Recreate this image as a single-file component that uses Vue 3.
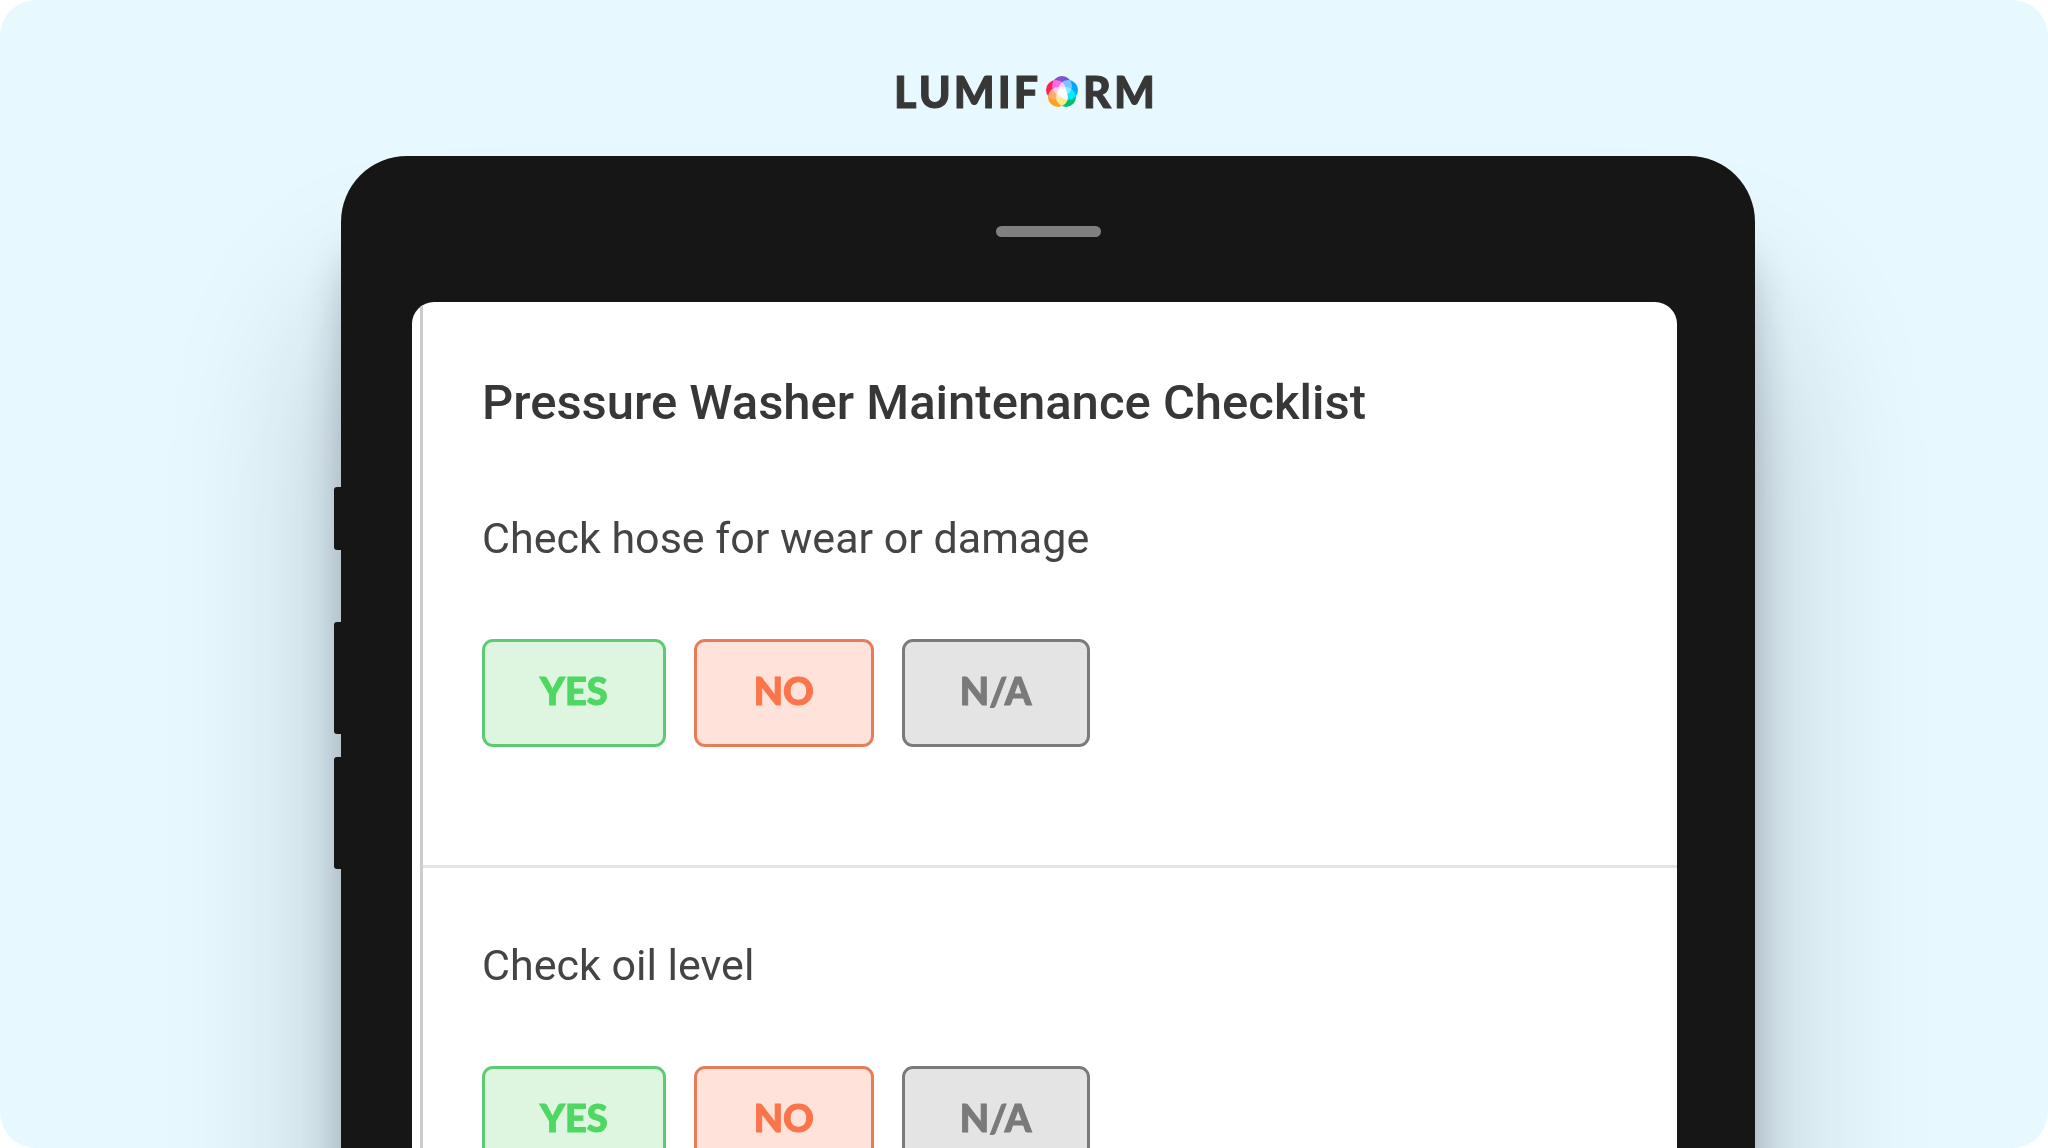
<script setup>
const answers = [
  { label: 'YES', tone: 'yes' },
  { label: 'NO', tone: 'no' },
  { label: 'N/A', tone: 'na' },
]

const questions = ['Check hose for wear or damage', 'Check oil level']

const petals = [
  { x: 16, y: 10, color: '#7c55cc' },
  { x: 22, y: 14, color: '#00a6fb' },
  { x: 20, y: 21, color: '#00c078' },
  { x: 12, y: 21, color: '#ffa01e' },
  { x: 10, y: 14, color: '#ff1f5c' },
]
</script>

<template>
  <main class="stage">
    <div class="brand" role="img" aria-label="Lumiform">
      <span class="brand-text">LUMIF</span>
      <svg class="brand-mark" viewBox="0 0 32 32" aria-hidden="true">
        <g class="petals">
          <circle v-for="p in petals" :key="p.color" :cx="p.x" :cy="p.y" r="10" :fill="p.color" />
        </g>
        <circle cx="16" cy="16" r="5" fill="#fff" opacity="0.5" />
      </svg>
      <span class="brand-text">RM</span>
    </div>

    <div class="device-row">
      <div class="device">
        <div class="side-keys">
          <i class="key key-short"></i>
          <i class="key"></i>
          <i class="key"></i>
        </div>
        <div class="speaker"></div>
        <div class="screen">
          <div class="sheet">
            <section
              v-for="(question, index) in questions"
              :key="question"
              class="item"
              role="group"
              :aria-labelledby="`question-${index}`"
            >
              <h1 v-if="index === 0" class="title">Pressure Washer Maintenance Checklist</h1>
              <p :id="`question-${index}`" class="question">{{ question }}</p>
              <div class="answers">
                <button
                  v-for="a in answers"
                  :key="a.tone"
                  type="button"
                  class="answer"
                  :class="a.tone"
                >{{ a.label }}</button>
              </div>
            </section>
          </div>
        </div>
      </div>
    </div>
  </main>
</template>

<style>
body {
  margin: 0;
  background: #fff;
}
</style>

<style scoped>
.stage {
  box-sizing: border-box;
  height: 100vh;
  overflow: hidden;
  border-radius: 36px;
  background: #e7f9ff;
  font-family: Roboto, "Liberation Sans", sans-serif;
  color: #373737;
}

.brand {
  display: flex;
  justify-content: center;
  align-items: center;
  gap: 5px;
  height: 60px;
  padding: 62px 0 34px 4px;
}

.brand-text {
  font-family: Lato, "Liberation Sans", sans-serif;
  font-weight: 900;
  font-size: 43px;
  line-height: 60px;
  letter-spacing: 3px;
  -webkit-text-stroke: 1px currentColor;
}

.brand-mark {
  width: 32px;
  height: 32px;
}

.petals {
  isolation: isolate;
}

.petals circle {
  mix-blend-mode: screen;
}

.device-row {
  display: flex;
  justify-content: center;
  padding-left: 48px;
}

.device {
  position: relative;
  box-sizing: border-box;
  width: 70.7%;
  padding: 70px 0 78px;
  border-radius: 66px;
  background: #161616;
  box-shadow:
    0 160px 170px rgba(0, 10, 20, 0.24),
    0 80px 40px rgba(0, 10, 20, 0.2);
}

.side-keys {
  position: absolute;
  top: 331px;
  left: -7px;
  display: flex;
  flex-direction: column;
  gap: 23px;
}

.key {
  width: 7px;
  height: 112px;
  border-radius: 3px 0 0 3px;
  background: #161616;
}

.key-short {
  height: 63px;
  margin-bottom: 49px;
}

.speaker {
  width: 105px;
  height: 11px;
  margin: 0 auto 65px;
  border-radius: 6px;
  background: #808080;
}

.screen {
  margin: 0 78px 0 71px;
  padding-left: 8px;
  border-radius: 22px;
  background: #fff;
  overflow: hidden;
}

.sheet {
  border-left: 3px solid #ccc;
}

.item {
  padding: 71px 59px 118px;
}

.item + .item {
  border-top: 3px solid #e2e3e2;
}

.title {
  margin: 0 0 79px;
  font-size: 49px;
  font-weight: 500;
  line-height: 60px;
}

.question {
  margin: 0 0 75px;
  font-size: 43px;
  font-weight: 400;
  line-height: 52px;
  color: #444;
}

.answers {
  display: flex;
  gap: 28px;
}

.answer {
  min-width: 180px;
  height: 108px;
  padding: 0 55px 6px;
  border: 3px solid;
  border-radius: 11px;
  font-family: Lato, "Liberation Sans", sans-serif;
  font-size: 38px;
  font-weight: 900;
  line-height: 48px;
  -webkit-text-stroke: 1px currentColor;
  cursor: pointer;
}

.yes {
  border-color: #5ccb73;
  background: #def6e0;
  color: #4fd763;
}

.no {
  border-color: #e97c58;
  background: #ffe2da;
  color: #fb744a;
}

.na {
  border-color: #7a7a7a;
  background: #e4e4e4;
  color: #7a7a7a;
}
</style>
